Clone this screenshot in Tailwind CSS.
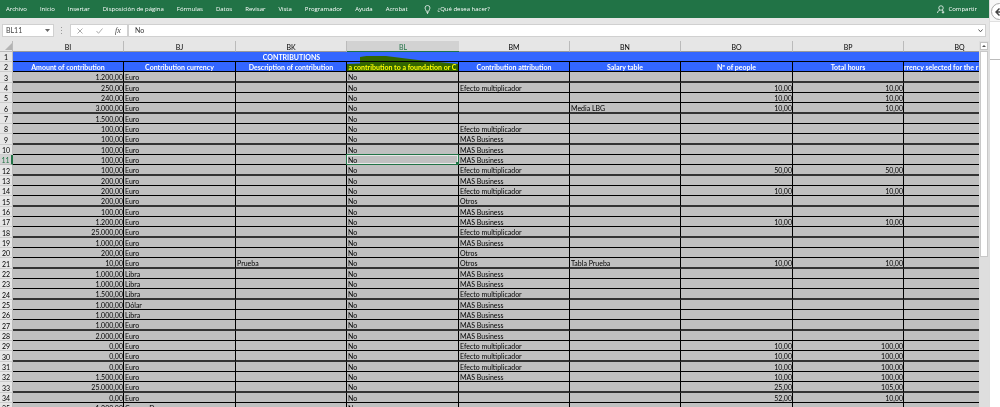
<!DOCTYPE html>
<html lang="es">
<head>
  <meta charset="UTF-8">
  <meta name="viewport" content="width=device-width, initial-scale=1.0">
  <title>Contributions</title>
  <script src="https://cdn.jsdelivr.net/npm/@tailwindcss/browser@4"></script>
</head>
<body class="flex h-screen overflow-hidden bg-white font-['Lato','Open_Sans',sans-serif] text-[7px] leading-[9px] text-black">
  <div class="flex min-w-0 flex-1 flex-col bg-[#e6e6e6]">
    <!-- Ribbon -->
    <header class="flex h-[18px] shrink-0 items-center bg-[#217346] pt-px pr-3 pl-[6px] font-['Open_Sans',sans-serif] text-[6px] text-white">
      <nav class="flex items-center gap-[13px] whitespace-nowrap">
        <a href="#">Archivo</a>
        <a href="#">Inicio</a>
        <a href="#">Insertar</a>
        <a href="#">Disposición de página</a>
        <a href="#">Fórmulas</a>
        <a href="#">Datos</a>
        <a href="#">Revisar</a>
        <a href="#">Vista</a>
        <a href="#">Programador</a>
        <a href="#">Ayuda</a>
        <a href="#">Acrobat</a>
      </nav>
      <button class="ml-4 flex items-center gap-[7px] whitespace-nowrap">
        <svg class="h-[9px] w-[7px]" viewBox="0 0 14 18" fill="none" stroke="currentColor" stroke-width="1.5"><path d="M4.5 12.5C4.5 10 2 9 2 6a5 5 0 0 1 10 0c0 3-2.500 4-2.500 6.500zM5 15h4M6 17h2"/></svg>
        ¿Qué desea hacer?
      </button>
      <button class="ml-auto flex items-center gap-[3px]">
        <svg class="h-[9px] w-[8px]" viewBox="0 0 16 18" fill="none" stroke="currentColor" stroke-width="1.5"><circle cx="8" cy="6" r="4.500"/><path d="M1 16c0-3 2-5 5-6M10 10c1.500.500 2.500 1.500 3 2.500M12 12v5M9.500 14.500h5"/></svg>
        Compartir
      </button>
    </header>

    <!-- Formula bar -->
    <div class="flex h-[23px] shrink-0 items-center pt-[2px] pr-[3px] pl-[2px]">
      <div class="flex h-[13px] w-[52px] items-center border border-[#d0d0d0] bg-white pr-[3px]">
        <input aria-label="Cuadro de nombres" value="BL11" class="w-full min-w-0 pl-[3px] text-[#444] outline-none">
        <button aria-label="Abrir lista"><svg class="h-[3px] w-[5px]" viewBox="0 0 5 3"><path d="M0 0h5L2.500 3z" fill="#666"/></svg></button>
      </div>
      <svg class="mx-[7px] h-[7px] w-[2px]" viewBox="0 0 2 7" fill="#999"><path d="M0 0h1v1H0zM0 3h1v1H0zM0 6h1v1H0z"/></svg>
      <div class="flex h-[13px] w-[58px] items-center justify-around border border-[#d0d0d0] bg-white">
        <button aria-label="Cancelar"><svg class="h-[6px] w-[6px]" viewBox="0 0 6 6" stroke="#aaa" fill="none"><path d="M.5.5l5 5M5.500.500l-5 5"/></svg></button>
        <button aria-label="Introducir"><svg class="h-[6px] w-[7px]" viewBox="0 0 7 6" stroke="#aaa" fill="none"><path d="M.5 3l2 2.300L6.500.500"/></svg></button>
        <button aria-label="Insertar función" class="font-['Liberation_Serif',serif] text-[8px] text-[#444] italic">fx</button>
      </div>
      <div class="flex h-[13px] flex-1 items-center border border-[#d0d0d0] bg-white pr-[2px]">
        <input aria-label="Barra de fórmulas" value="No" class="w-full min-w-0 pl-[6px] text-[#333] outline-none">
        <button aria-label="Expandir"><svg class="h-[4px] w-[5px]" viewBox="0 0 5 4" fill="none" stroke="#555"><path d="M.5.5l2 2.300 2-2.300"/></svg></button>
      </div>
    </div>

    <div class="flex min-h-0 flex-1">
      <!-- Sheet -->
      <div class="min-w-0 flex-1 overflow-hidden">
        <table class="w-[1016px] table-fixed border-separate border-spacing-0">
          <colgroup>
            <col class="w-[13px]"><col class="w-[111px]"><col class="w-[112px]"><col class="w-[111px]"><col class="w-[112px]"><col class="w-[111px]"><col class="w-[111px]"><col class="w-[112px]"><col class="w-[111px]"><col class="w-[112px]">
          </colgroup>
          <thead id="letters"></thead>
          <tbody id="cells"></tbody>
        </table>
      </div>
      <!-- Scroll bar -->
      <div class="flex w-[10px] flex-col items-center bg-[#dedede] px-px pt-px">
        <button aria-label="Subir" class="flex h-[8px] w-full shrink-0 items-center justify-center border border-[#c4c4c4] bg-white"><svg class="h-[2px] w-[4px]" viewBox="0 0 4 2"><path d="M0 2h4L2 0z" fill="#555"/></svg></button>
        <div class="mt-px h-[206px] w-full shrink-0 border border-[#c8c8c8] bg-white"></div>
      </div>
    </div>
  </div>

  <!-- Side pane -->
  <aside class="w-[11px] shrink-0 overflow-hidden border-l border-[#ddd] bg-white">
    <div class="h-[22px] border-b border-[#e0e0e0] bg-[#f7f7f7] pt-[3px] pl-px">
      <button aria-label="Atrás" class="flex size-[17px] items-center rounded-full border border-[#aaa] bg-white pl-[3px]"><svg class="h-[8px] w-[9px]" viewBox="0 0 9 8" fill="none" stroke="#444" stroke-width="1.5"><path d="M9 4H1M4.500.500L1 4l3.500 3.500"/></svg></button>
    </div>
    <div class="h-[38px] border-b border-[#bbb]"></div>
  </aside>

  <script>
    const letters = ['BI', 'BJ', 'BK', 'BL', 'BM', 'BN', 'BO', 'BP', 'BQ'];
    const titles = ['Amount of contribution', 'Contribution currency', 'Description of contribution', 'a contribution to a foundation or C', 'Contribution attribution', 'Salary table', 'Nº of people', 'Total hours', 'rrency selected for the r'];
    const E = 'Efecto multiplicador', M = 'MAS Business', O = 'Otros';
    // amount, currency, description, attribution, salary table, people, hours
    const data = [
      ['1.200,00', 'Euro'],
      ['250,00', 'Euro', '', E, '', '10,00', '10,00'],
      ['240,00', 'Euro', '', '', '', '10,00', '10,00'],
      ['3.000,00', 'Euro', '', '', 'Media LBG', '10,00', '10,00'],
      ['1.500,00', 'Euro'],
      ['100,00', 'Euro', '', E],
      ['100,00', 'Euro', '', M],
      ['100,00', 'Euro', '', M],
      ['100,00', 'Euro', '', M],
      ['100,00', 'Euro', '', E, '', '50,00', '50,00'],
      ['200,00', 'Euro', '', M],
      ['200,00', 'Euro', '', E, '', '10,00', '10,00'],
      ['200,00', 'Euro', '', O],
      ['100,00', 'Euro', '', M],
      ['1.200,00', 'Euro', '', M, '', '10,00', '10,00'],
      ['25.000,00', 'Euro', '', E],
      ['1.000,00', 'Euro', '', M],
      ['200,00', 'Euro', '', O],
      ['10,00', 'Euro', 'Prueba', O, 'Tabla Prueba', '10,00', '10,00'],
      ['1.000,00', 'Libra', '', M],
      ['1.000,00', 'Libra', '', M],
      ['1.500,00', 'Libra', '', E],
      ['1.000,00', 'Dólar', '', M],
      ['1.000,00', 'Libra', '', M],
      ['1.000,00', 'Euro', '', M],
      ['2.000,00', 'Euro', '', M],
      ['0,00', 'Euro', '', E, '', '10,00', '100,00'],
      ['0,00', 'Euro', '', E, '', '10,00', '100,00'],
      ['0,00', 'Euro', '', E, '', '10,00', '100,00'],
      ['1.500,00', 'Euro', '', M, '', '10,00', '100,00'],
      ['25.000,00', 'Euro', '', '', '', '25,00', '105,00'],
      ['0,00', 'Euro', '', '', '', '52,00', '10,00'],
      ['1.200,00', 'Corona Danesa']
    ];

    const corner = '<th class="h-[11px] border-r border-b border-[#bbb] p-0"><svg class="ml-auto h-[7px] w-[7px]" viewBox="0 0 7 7"><path d="M7 0v7H0z" fill="#b4b4b4"/></svg></th>';
    document.getElementById('letters').innerHTML = '<tr>' + corner + letters.map(l =>
      l === 'BL'
        ? '<th class="h-[11px] border-b border-[#217346] bg-[#d2d2d2] p-0 font-normal text-[#217346]"><div class="h-[9px] leading-[11px]">BL</div></th>'
        : `<th class="h-[11px] border-r border-b border-r-[#bbb] border-b-[#999] p-0 font-normal"><div class="h-[9px] leading-[11px]">${l}</div></th>`
    ).join('') + '</tr>';

    function rowHead(n) {
      return n === 11
        ? '<th class="border-r-2 border-b border-r-[#217346] border-b-[#bbb] bg-[#d2d2d2] p-0 font-normal text-[#217346]"><div class="h-[9px] leading-[11px]">11</div></th>'
        : `<th class="border-r border-b border-r-[#bbb] border-b-[#ccc] p-0 font-normal"><div class="h-[9px] leading-[11px]">${n}</div></th>`;
    }
    // every third row is a pixel taller, with the heavier rule
    function rowOpen(n) {
      return n % 3 === 0
        ? '<tr class="h-[11px] [&>td]:border-b-2 [&>td]:border-b-[#333]">'
        : '<tr class="h-[10px] [&>td]:border-b [&>td]:border-b-black">';
    }
    const marker = '<svg class="pointer-events-none absolute -top-[6px] left-0 z-10 h-[16px] w-[112px] mix-blend-multiply" viewBox="0 0 112 16"><path d="M0 8l13-.5V1q8-2 26-1l32 4 41 4v7H21v1H0z" fill="#ff0"/></svg>';

    let html = rowOpen(1) + rowHead(1) + letters.map(l =>
      `<td class="bg-[#3366ff] p-0 text-center font-bold text-white">${l === 'BK' ? '<div class="h-[9px] leading-[11px]">CONTRIBUTIONS</div>' : ''}</td>`).join('') + '</tr>';
    html += rowOpen(2) + rowHead(2) + titles.map((t, i) =>
      `<td class="border-r border-black bg-[#3366ff] p-0 font-bold whitespace-nowrap text-white"><div class="relative">${i === 3 ? marker : ''}<div class="flex h-[9px] overflow-hidden leading-[11px] ${i === 8 ? 'justify-start' : 'justify-center'}">${t}</div></div></td>`).join('') + '</tr>';
    data.forEach((d, i) => {
      const n = i + 3;
      const row = [d[0], d[1], d[2], 'No', d[3], d[4], d[5], d[6], ''];
      html += rowOpen(n) + rowHead(n) + row.map((v, c) => {
        const align = c === 0 || c === 6 || c === 7 ? 'text-right' : 'text-left';
        const sel = n === 11 && c === 3
          ? '<span class="absolute -inset-px border border-[#217346] shadow-[inset_0_0_0_1px_#e8e8e8]"></span><span class="absolute -right-px -bottom-px size-[3px] bg-[#217346]"></span>' : '';
        return `<td class="border-r border-r-black bg-[#c0c0c0] p-0 whitespace-nowrap ${align}"><div class="relative h-[9px] pl-px leading-[11px]">${sel}<span class="relative">${v || ''}</span></div></td>`;
      }).join('') + '</tr>';
    });
    document.getElementById('cells').innerHTML = html;
  </script>
</body>
</html>
